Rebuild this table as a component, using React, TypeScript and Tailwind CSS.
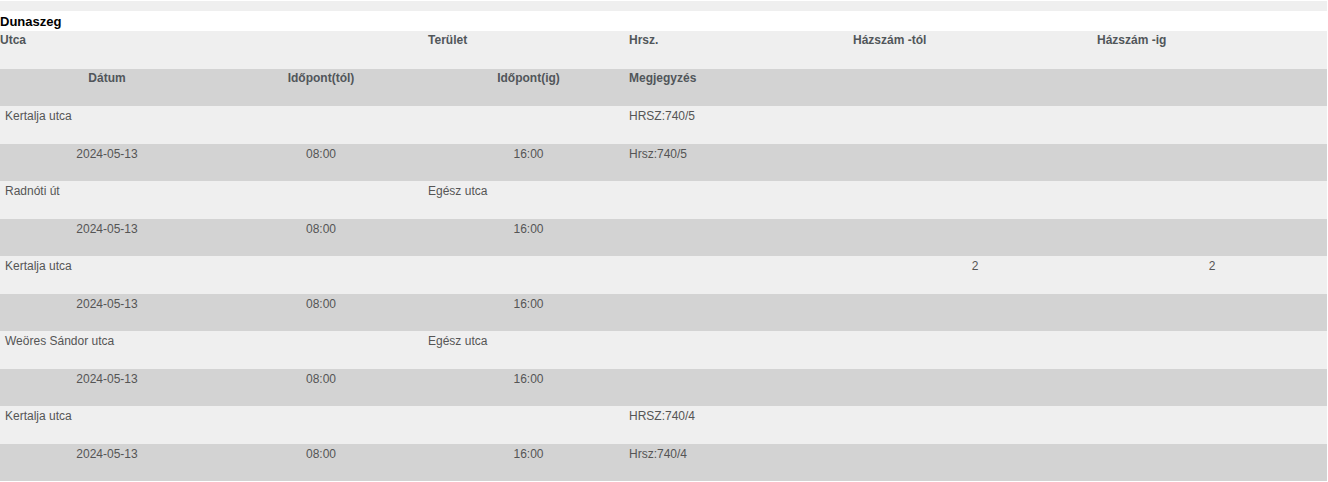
import React from 'react';

type Entry = {
  utca: string;
  terulet: string;
  hrsz: string;
  hazTol: string;
  hazIg: string;
  datum: string;
  tol: string;
  ig: string;
  megjegyzes: string;
};

const entries: Entry[] = [
  { utca: 'Kertalja utca', terulet: '', hrsz: 'HRSZ:740/5', hazTol: '', hazIg: '', datum: '2024-05-13', tol: '08:00', ig: '16:00', megjegyzes: 'Hrsz:740/5' },
  { utca: 'Radnóti út', terulet: 'Egész utca', hrsz: '', hazTol: '', hazIg: '', datum: '2024-05-13', tol: '08:00', ig: '16:00', megjegyzes: '' },
  { utca: 'Kertalja utca', terulet: '', hrsz: '', hazTol: '2', hazIg: '2', datum: '2024-05-13', tol: '08:00', ig: '16:00', megjegyzes: '' },
  { utca: 'Weöres Sándor utca', terulet: 'Egész utca', hrsz: '', hazTol: '', hazIg: '', datum: '2024-05-13', tol: '08:00', ig: '16:00', megjegyzes: '' },
  { utca: 'Kertalja utca', terulet: '', hrsz: 'HRSZ:740/4', hazTol: '', hazIg: '', datum: '2024-05-13', tol: '08:00', ig: '16:00', megjegyzes: 'Hrsz:740/4' },
];

const th = 'h-[37.5px] p-0 pt-[2px] align-top font-bold text-[12px] leading-[14px] text-[#51565a]';
const td = 'h-[37.5px] p-0 pt-[3px] align-top text-[12px] leading-[14px] text-[#555]';

export default function App() {
  return (
    <div className="w-[1327px] bg-white font-['Liberation_Sans',Arial,sans-serif]">
      <div className="mt-px h-[10px] bg-[#efefef]" />
      <div className="h-[20px] pt-[3px] text-[13px] leading-[15px] font-bold text-black">Dunaszeg</div>
      <table className="w-full table-fixed border-collapse">
        <colgroup>
          <col className="w-[214px]" />
          <col className="w-[214px]" />
          <col className="w-[201px]" />
          <col className="w-[224px]" />
          <col className="w-[244px]" />
          <col className="w-[230px]" />
        </colgroup>
        <thead>
          <tr className="bg-[#efefef]">
            <th colSpan={2} className={`${th} text-left`}>Utca</th>
            <th className={`${th} text-left`}>Terület</th>
            <th className={`${th} text-left`}>Hrsz.</th>
            <th className={`${th} text-left`}>Házszám -tól</th>
            <th className={`${th} text-left`}>Házszám -ig</th>
          </tr>
          <tr className="bg-[#d3d3d3]">
            <th className={`${th} text-center`}>Dátum</th>
            <th className={`${th} text-center`}>Időpont(tól)</th>
            <th className={`${th} text-center`}>Időpont(ig)</th>
            <th className={`${th} text-left`}>Megjegyzés</th>
            <th className={th} />
            <th className={th} />
          </tr>
        </thead>
        <tbody>
          {entries.map((e, i) => (
            <React.Fragment key={i}>
              <tr className="bg-[#efefef]">
                <td colSpan={2} className={`${td} pl-[5px]`}>{e.utca}</td>
                <td className={td}>{e.terulet}</td>
                <td className={td}>{e.hrsz}</td>
                <td className={`${td} text-center`}>{e.hazTol}</td>
                <td className={`${td} text-center`}>{e.hazIg}</td>
              </tr>
              <tr className="bg-[#d3d3d3]">
                <td className={`${td} text-center`}>{e.datum}</td>
                <td className={`${td} text-center`}>{e.tol}</td>
                <td className={`${td} text-center`}>{e.ig}</td>
                <td className={td}>{e.megjegyzes}</td>
                <td className={td} />
                <td className={td} />
              </tr>
            </React.Fragment>
          ))}
        </tbody>
      </table>
    </div>
  );
}
